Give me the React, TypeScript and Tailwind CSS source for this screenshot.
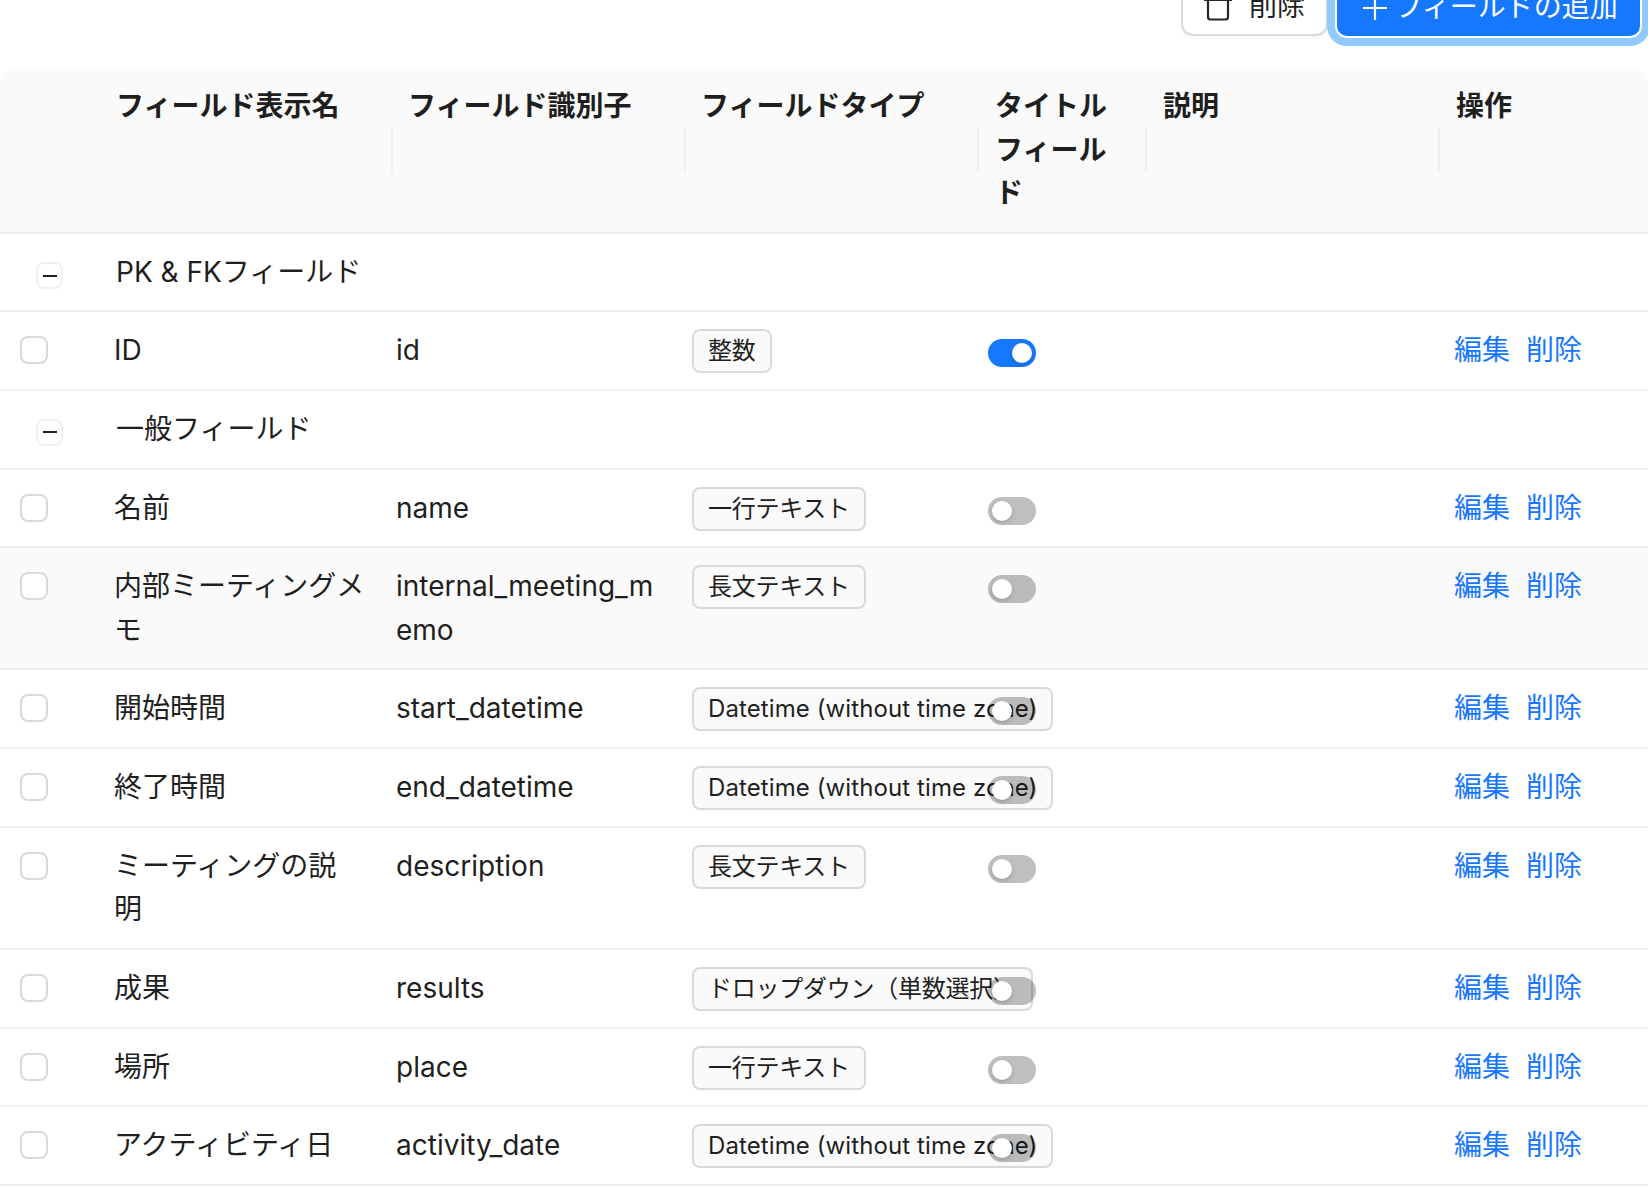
const GRID = 'grid grid-cols-[101px_292px_293px_293px_168px_293px_202px]';
const FONT = "font-['Inter','Noto_Sans_CJK_JP',sans-serif]";

type Field = {
  name: string;
  id: string;
  type: string;
  on?: boolean;
  tall?: boolean;
  hover?: boolean;
};
type Row = { group: string; first?: boolean } | Field;

const rows: Row[] = [
  { group: 'PK & FKフィールド', first: true },
  { name: 'ID', id: 'id', type: '整数', on: true },
  { group: '一般フィールド' },
  { name: '名前', id: 'name', type: '一行テキスト' },
  { name: '内部ミーティングメ\nモ', id: 'internal_meeting_m\nemo', type: '長文テキスト', tall: true, hover: true },
  { name: '開始時間', id: 'start_datetime', type: 'Datetime (without time zone)' },
  { name: '終了時間', id: 'end_datetime', type: 'Datetime (without time zone)' },
  { name: 'ミーティングの説\n明', id: 'description', type: '長文テキスト', tall: true },
  { name: '成果', id: 'results', type: 'ドロップダウン（単数選択）' },
  { name: '場所', id: 'place', type: '一行テキスト' },
  { name: 'アクティビティ日', id: 'activity_date', type: 'Datetime (without time zone)' },
];

const headers = ['フィールド表示名', 'フィールド識別子', 'フィールドタイプ', 'タイトル\nフィール\nド', '説明', '操作'];

function Toggle({ on }: { on?: boolean }) {
  return (
    <span
      className={`flex h-[28px] w-[48px] items-center rounded-full px-[4px] ${
        on ? 'justify-end bg-[#1677ff]' : 'justify-start bg-black/25'
      }`}
    >
      <span className="size-[20px] rounded-full bg-white shadow-[0_2px_4px_rgba(0,35,11,0.2)]" />
    </span>
  );
}

function FieldRow({ f }: { f: Field }) {
  const latin = f.type.startsWith('Datetime');
  return (
    <div
      className={`${GRID} border-b-2 border-[#f0f0f0] pt-[16px] ${f.tall ? 'h-[122px]' : 'h-[78.75px]'} ${
        f.hover ? 'bg-[#fafafa]' : ''
      }`}
    >
      <div className="pl-[20px] pt-[8px]">
        <span className="block size-[28px] rounded-[8px] border-2 border-[#d9d9d9] bg-white" />
      </div>
      <div className="whitespace-pre-line pl-[13px] pt-[1px]">{f.name}</div>
      <div className="whitespace-pre-line pl-[3px] pt-[1px]">{f.id}</div>
      <div className="pl-[6px]">
        <span
          className={`inline-block h-[44px] whitespace-nowrap rounded-[8px] border-2 border-[#d9d9d9] bg-[#fafafa] px-[14px] text-[24px] leading-[40px] ${
            latin ? 'tracking-[0.1px]' : 'tracking-[-0.25px]'
          }`}
        >
          {f.type}
        </span>
      </div>
      <div className="pl-[9px] pt-[11px]">
        <Toggle on={f.on} />
      </div>
      <div />
      <div className="flex gap-[16px] pl-[14px] pt-[1px] text-[#1677ff]">
        <span>編集</span>
        <span>削除</span>
      </div>
    </div>
  );
}

export default function App() {
  return (
    <div className={`${FONT} h-[1202px] w-[1648px] overflow-hidden bg-white text-[28px] leading-[43.5px] text-[#1f1f1f]`}>
      <div className="-mt-[22px] flex h-[60px] items-start justify-end gap-[7px] pr-[6px]">
        <button className="flex h-[58px] w-[147px] items-center justify-center gap-[17px] rounded-[12px] border-2 border-[#d9d9d9] bg-white shadow-[0_4px_0_rgba(0,0,0,0.02)]">
          <svg width="28" height="28" viewBox="0 0 28 28" fill="none" stroke="#262626" strokeWidth="2.2">
            <path d="M0 7h28M4 7v17a2.5 2.5 0 0 0 2.5 2.5h15A2.5 2.5 0 0 0 24 24V7M9 7V2h10v5" />
          </svg>
          削除
        </button>
        <button className="flex h-[60px] w-[307px] items-center justify-center gap-[7px] rounded-[12px] border-2 border-white bg-[#1677ff] pl-[4px] text-white shadow-[0_0_0_8px_#91caff]">
          <svg width="24" height="24" viewBox="0 0 24 24" fill="none" stroke="currentColor" strokeWidth="2.2">
            <path d="M12 0v24M0 12h24" />
          </svg>
          フィールドの追加
        </button>
      </div>

      <div className={`${GRID} mt-[30px] h-[166px] rounded-t-[16px] border-b-2 border-[#f0f0f0] bg-[#fafafa] font-semibold`}>
        <div />
        {headers.map((h, i) => (
          <div key={h} className="flex justify-between">
            <div className={`whitespace-pre-line pt-[17px] ${i < 3 ? 'pl-[15px]' : 'pl-[16px]'}`}>{h}</div>
            {i < 5 && <span className="h-[44px] w-[2px] shrink-0 self-center bg-[#f0f0f0]" />}
          </div>
        ))}
      </div>

      {rows.map((r, i) =>
        'group' in r ? (
          <div key={i} className={`${GRID} ${r.first ? 'h-[78px]' : 'h-[78.75px]'} border-b-2 border-[#f0f0f0] pt-[17px]`}>
            <div className="pl-[36px] pt-[11px]">
              <span className="flex size-[27px] items-center justify-center rounded-[8px] border-2 border-[#f0f0f0] bg-white">
                <span className="h-[2px] w-[14px] bg-[#1f1f1f]" />
              </span>
            </div>
            <div className="col-span-2 pl-[15px]">{r.group}</div>
          </div>
        ) : (
          <FieldRow key={i} f={r} />
        ),
      )}
    </div>
  );
}
